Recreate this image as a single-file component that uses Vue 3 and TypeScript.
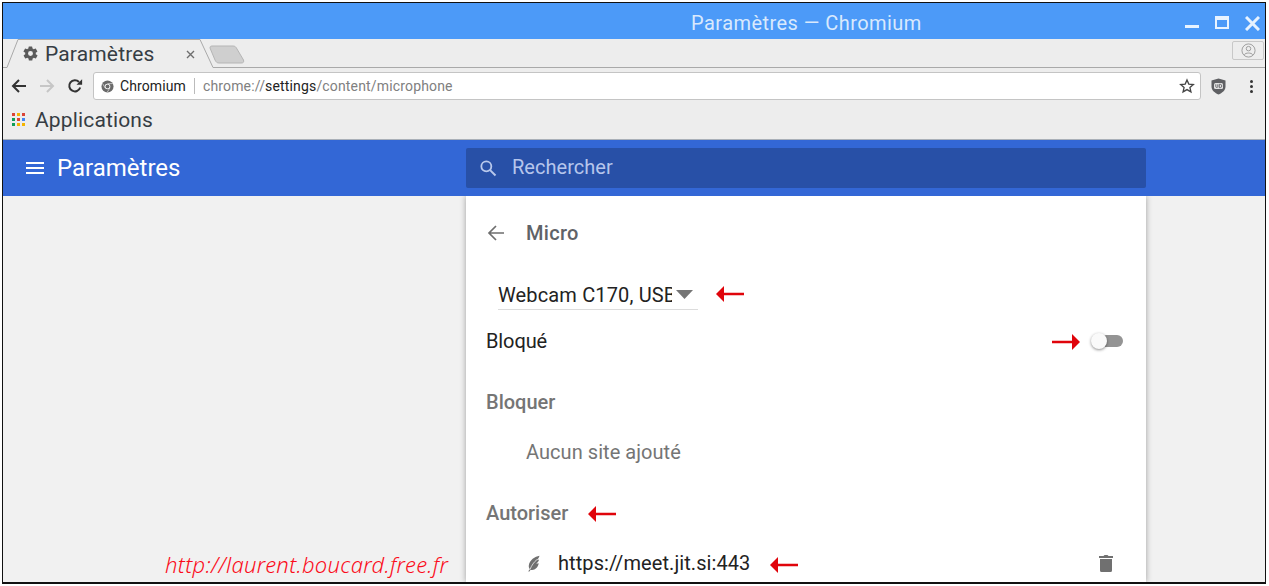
<script setup lang="ts">
interface Arrow { x: number; y: number; dir: 'left' | 'right' }
const arrows: Arrow[] = [
  { x: 715, y: 294, dir: 'left' },
  { x: 1052, y: 342, dir: 'right' },
  { x: 587, y: 514, dir: 'left' },
  { x: 769, y: 565, dir: 'left' },
]
const appDots = ['#db4437', '#f4b400', '#db4437', '#0f9d58', '#db4437', '#4285f4', '#0f9d58', '#f4b400', '#f4b400']
</script>

<template>
  <div class="window">
    <header class="titlebar">
      <span class="title">Paramètres — Chromium</span>
      <div class="wm">
        <svg width="14" height="14" viewBox="0 0 14 14"><rect x="0" y="9" width="14" height="3" fill="#e8f3ff" /></svg>
        <svg width="14" height="14" viewBox="0 0 14 14"><path d="M1 1h12v11H1z" fill="none" stroke="#e8f3ff" stroke-width="2" /><rect x="0" y="0" width="14" height="4" fill="#e8f3ff" /></svg>
        <svg width="15" height="15" viewBox="0 0 15 15"><path d="M1 1l13 13M14 1L1 14" stroke="#e8f3ff" stroke-width="3" /></svg>
      </div>
    </header>

    <div class="tabstrip">
      <svg class="tabshape" width="1263" height="29" viewBox="0 0 1263 29">
        <path d="M0 28.500H4L15 .5H197L210 28.500H1263" fill="none" stroke="#a9a9a9" />
        <path d="M207 9C207 7 208 7 210 7H230C232 7 233 8 234 10L240.500 21C241 23 240.500 24 238 24H216C214 24 213 23 212 21Z" fill="#cfcfcf" stroke="#b5b5b5" />
      </svg>
      <div class="tab">
        <svg class="gear" width="17" height="17" viewBox="0 0 24 24"><path fill="#5a5a5a" d="M19.400 13a7.500 7.500 0 0 0 0-2l2.100-1.600a.5.5 0 0 0 .1-.6l-2-3.500a.5.5 0 0 0-.6-.2l-2.500 1a7.300 7.300 0 0 0-1.700-1l-.4-2.700a.5.5 0 0 0-.5-.4h-4a.5.5 0 0 0-.5.4l-.4 2.700a7.300 7.300 0 0 0-1.700 1l-2.500-1a.5.5 0 0 0-.6.2l-2 3.500a.5.5 0 0 0 .1.6L4.600 11a7.500 7.500 0 0 0 0 2l-2.100 1.600a.5.5 0 0 0-.1.6l2 3.500c.1.2.4.3.6.2l2.500-1a7.300 7.300 0 0 0 1.700 1l.4 2.700c0 .2.3.4.5.4h4c.2 0 .5-.2.5-.4l.4-2.700a7.300 7.300 0 0 0 1.700-1l2.500 1c.2.1.5 0 .6-.2l2-3.500a.5.5 0 0 0-.1-.6zM12 15.500a3.500 3.500 0 1 1 0-7 3.500 3.500 0 0 1 0 7z" /></svg>
        <span class="tabtext">Paramètres</span>
        <svg class="tabx" width="9" height="9" viewBox="0 0 9 9"><path d="M1 1l7 7M8 1L1 8" stroke="#6e6e6e" stroke-width="1.400" /></svg>
      </div>
      <div class="profile">
        <svg width="15" height="15" viewBox="0 0 16 16"><circle cx="8" cy="8" r="7" fill="none" stroke="#9a9a9a" /><circle cx="8" cy="6" r="2.400" fill="none" stroke="#9a9a9a" /><path d="M3.600 12.500c1-2.400 7.800-2.400 8.800 0" fill="none" stroke="#9a9a9a" /></svg>
      </div>
    </div>

    <div class="toolbar">
      <svg class="navicon" width="16" height="16" viewBox="0 0 16 16"><path d="M15 8H2M8 2L2 8l6 6" fill="none" stroke="#333" stroke-width="2" /></svg>
      <svg class="navicon" width="16" height="16" viewBox="0 0 16 16"><path d="M1 8h13M8 2l6 6-6 6" fill="none" stroke="#c6c6c6" stroke-width="2" /></svg>
      <svg class="navicon" width="16" height="16" viewBox="0 0 16 16"><path d="M13.200 9.500A5.600 5.600 0 1 1 12 4" fill="none" stroke="#333" stroke-width="2" /><path d="M9.500 6.800h5.600V1.200z" fill="#333" /></svg>
      <div class="omnibox">
        <svg width="13" height="13" viewBox="0 0 14 14"><circle cx="7" cy="7" r="6.500" fill="#6a6a6a" /><circle cx="7" cy="7" r="3" fill="#fff" /><circle cx="7" cy="7" r="2.100" fill="#6a6a6a" /><path d="M7 3.900h5.600M4.400 8.500L1.800 4M9.600 8.500L6.800 13" stroke="#dedede" stroke-width=".8" /></svg>
        <span class="origin">Chromium</span>
        <span class="sep"></span>
        <span class="url">chrome://<b>settings</b>/content/microphone</span>
        <svg class="star" width="16" height="16" viewBox="0 0 24 24"><path d="M12 3l2.700 6.200 6.800.6-5.100 4.500 1.500 6.600L12 17.400 6.100 20.900l1.500-6.600L2.500 9.800l6.800-.6z" fill="none" stroke="#444" stroke-width="2" /></svg>
      </div>
      <svg class="shield" width="15" height="17" viewBox="0 0 15 17"><path d="M7.500 .5L14.500 2.500V8.500C14.500 12.500 11 15 7.500 16.500C4 15 .5 12.500 .5 8.500V2.500z" fill="#5f6063" /><rect x="3" y="5" width="9" height="6" rx="1.500" fill="#e2e2e2" /><path d="M4.800 6.300v2.400c0 1 2 1 2 0V6.300M8.300 6.300v3.400h1c2 0 2-3.400 0-3.400z" fill="none" stroke="#5f6063" stroke-width=".9" /></svg>
      <div class="menu"><i></i><i></i><i></i></div>
    </div>

    <div class="bookmarks">
      <div class="apps"><i v-for="(c, i) in appDots" :key="i" :style="{ background: c }"></i></div>
      <span class="appstext">Applications</span>
    </div>

    <div class="settings-head">
      <div class="brand">
        <svg width="18" height="14" viewBox="0 0 18 14"><path d="M0 2h18M0 7h18M0 12h18" stroke="#fff" stroke-width="2" /></svg>
        <span>Paramètres</span>
      </div>
      <div class="search">
        <svg width="20" height="20" viewBox="0 0 24 24"><circle cx="10" cy="10" r="6" fill="none" stroke="#b8c8ec" stroke-width="2.200" /><path d="M14.500 14.500l6.500 6.500" stroke="#b8c8ec" stroke-width="2.400" /></svg>
        <span class="searchtext">Rechercher</span>
      </div>
    </div>

    <main class="page">
      <section class="card">
        <div class="subhead">
          <svg width="20" height="20" viewBox="0 0 20 20"><path d="M18 10H3M10 3l-7 7 7 7" fill="none" stroke="#6e6e6e" stroke-width="1.700" /></svg>
          <span>Micro</span>
        </div>
        <div class="select">
          <span class="selecttext">Webcam C170, USB Audio</span>
          <svg width="17" height="9" viewBox="0 0 17 9"><path d="M0 0h17L8.500 9z" fill="#757575" /></svg>
        </div>
        <div class="toggle-row">
          <span>Bloqué</span>
          <div class="switch"><i class="track"></i><i class="knob"></i></div>
        </div>
        <h2 class="section block-head">Bloquer</h2>
        <p class="empty">Aucun site ajouté</p>
        <h2 class="section allow-head">Autoriser</h2>
        <div class="site">
          <svg class="feather" width="14" height="17" viewBox="0 0 14 17"><path d="M12.500 .8C8 1.500 2.500 5 1.800 10.500c-.2 1.600.3 2.800 1.100 3.600L1.300 16.300l.8.500 1.600-2.100c3.800 1 7.600-2.400 8-6.500-1 .4-1.800.4-2.500.3 1.500-.8 2.600-2.200 2.800-3.900-.9.500-1.700.7-2.400.7 1-1 2.400-2.500 2.900-4.500z" fill="#707070" /><path d="M3 14.500C4.500 10.500 7 7 10 4.500" fill="none" stroke="#fff" stroke-width=".7" /></svg>
          <span class="sitename">https://meet.jit.si:443</span>
          <svg class="trash" width="14" height="18" viewBox="0 0 14 18"><path d="M0 2h4.500L5.500 1h3l1 1H14v2H0zM1 5h12v11.500a1.500 1.500 0 0 1-1.500 1.500h-9A1.500 1.500 0 0 1 1 16.500z" fill="#707070" /></svg>
        </div>
      </section>
    </main>

    <a class="watermark">http://laurent.boucard.free.fr</a>
  </div>

  <svg
    v-for="(a, i) in arrows"
    :key="i"
    class="arrow"
    :style="{ left: a.x + 'px', top: a.y - 8 + 'px' }"
    width="29"
    height="16"
    viewBox="0 0 29 16"
  >
    <path v-if="a.dir === 'left'" d="M1 8L9 0V6.800H29V9.200H9V16z" fill="#e0040b" />
    <path v-else d="M28 8L20 0V6.800H0V9.200H20V16z" fill="#e0040b" />
  </svg>
</template>

<style>
html, body { background: #fff; margin: 0; overflow: hidden; }
</style>

<style scoped>
.window {
  position: absolute;
  left: 2px;
  top: 2px;
  width: 1264px;
  height: 582px;
  box-sizing: border-box;
  border: 1px solid #111;
  border-bottom-width: 2px;
  display: flex;
  flex-direction: column;
  overflow: hidden;
  background: #f1f1f1;
  font-family: Roboto, sans-serif;
}
.titlebar {
  flex: 0 0 36px;
  box-sizing: border-box;
  background: #4c9af8;
  display: flex;
  align-items: center;
  padding-left: 688px;
  padding-top: 4px;
  position: relative;
}
.title { color: #d9e9fd; font-size: 20px; letter-spacing: 0.45px; }
.wm {
  position: absolute;
  right: 5px;
  top: 13px;
  display: flex;
  gap: 16px;
  align-items: flex-start;
}
.tabstrip {
  flex: 0 0 29px;
  background: #ededed;
  position: relative;
  display: flex;
}
.tabshape { position: absolute; left: 0; top: 0; }
.tab {
  position: relative;
  margin-left: 19px;
  width: 175px;
  display: flex;
  align-items: center;
  height: 29px;
}
.gear { flex: none; }
.tabtext { margin-left: 6px; font-size: 21px; color: #363d44; letter-spacing: .15px; }
.tabx { position: absolute; left: 164px; top: 11px; }
.profile {
  position: absolute;
  left: 1229px;
  top: 2px;
  width: 30px;
  height: 17px;
  border: 1px solid #c8c8c8;
  border-radius: 2px;
  display: flex;
  align-items: center;
  justify-content: center;
}
.toolbar {
  flex: 0 0 36px;
  background: #ededed;
  display: flex;
  align-items: center;
  padding-left: 8px;
  box-sizing: border-box;
}
.navicon { flex: none; margin-right: 12px; }
.navicon:nth-child(3) { margin-right: 10px; }
.omnibox {
  box-sizing: border-box;
  flex: 0 0 1108px;
  height: 28px;
  background: #fff;
  border: 1px solid #c4c4c4;
  border-radius: 3px;
  display: flex;
  align-items: center;
  padding-left: 7px;
  font-size: 14px;
}
.origin { margin-left: 6px; color: #222; letter-spacing: .1px; }
.sep { width: 1px; height: 16px; background: #bbb; margin: 0 8px; }
.url { color: #808080; letter-spacing: .16px; }
.url b { color: #222; font-weight: 400; }
.star { margin-left: auto; margin-right: 5px; }
.shield { flex: none; margin-left: 10px; }
.menu {
  margin-left: 24px;
  width: 3px;
  display: flex;
  flex-direction: column;
  gap: 2px;
}
.menu i { display: block; width: 3px; height: 3px; border-radius: 50%; background: #333; }
.bookmarks {
  flex: 0 0 35px;
  box-sizing: content-box;
  background: #ededed;
  display: flex;
  align-items: center;
  padding-left: 9px;
  border-bottom: 1px solid #aab0b8;
}
.apps {
  display: grid;
  grid-template-columns: repeat(3, 3px);
  grid-auto-rows: 3px;
  gap: 2px;
  margin-bottom: 4px;
}
.apps i { display: block; }
.appstext {
  margin-left: 10px;
  margin-bottom: 4px;
  font-size: 21px;
  color: #363d44;
  letter-spacing: .15px;
}
.settings-head {
  flex: 0 0 56px;
  background: #3367d6;
  display: flex;
  align-items: center;
  position: relative;
  z-index: 1;
}
.brand {
  width: 463px;
  flex: none;
  box-sizing: border-box;
  padding-left: 23px;
  display: flex;
  align-items: center;
  gap: 13px;
  color: #fff;
  font-size: 24px;
}
.search {
  width: 680px;
  height: 40px;
  background: #2850a7;
  border-radius: 2px;
  display: flex;
  align-items: center;
  padding-left: 12px;
  gap: 14px;
  box-sizing: border-box;
  color: #b6c6ec;
  font-size: 20px;
}
.searchtext { position: relative; top: -1px; letter-spacing: .03px; }
.page {
  flex: 1;
  min-height: 0;
  padding-left: 463px;
  background: #f1f1f1;
}
.card {
  width: 680px;
  height: 100%;
  background: #fff;
  box-shadow: 0 0 6px rgba(0, 0, 0, .35);
  box-sizing: border-box;
  padding: 0 20px;
  display: flex;
  flex-direction: column;
  overflow: hidden;
}
.subhead {
  flex: 0 0 74px;
  display: flex;
  align-items: center;
  gap: 20px;
  color: #5f6368;
  font-size: 20px;
  font-weight: 500;
  letter-spacing: .3px;
}
.select {
  margin-left: 12px;
  width: 200px;
  height: 40px;
  box-sizing: border-box;
  border-bottom: 1px solid #dcdcdc;
  display: flex;
  align-items: center;
  justify-content: space-between;
  padding-right: 5px;
  padding-top: 10px;
  flex: none;
}
.selecttext {
  width: 174px;
  overflow: hidden;
  white-space: nowrap;
  font-size: 20px;
  color: #222;
  letter-spacing: .15px;
}
.toggle-row {
  flex: 0 0 62px;
  display: flex;
  align-items: center;
  justify-content: space-between;
  font-size: 20px;
  color: #222;
  letter-spacing: -.1px;
}
.switch { position: relative; width: 32px; height: 16px; margin-right: 3px; }
.track {
  position: absolute;
  left: 2px;
  top: 2px;
  width: 30px;
  height: 12px;
  border-radius: 6px;
  background: #949494;
}
.knob {
  position: absolute;
  left: 0;
  top: 0;
  width: 16px;
  height: 16px;
  border-radius: 50%;
  background: #fafafa;
  box-shadow: 0 1px 3px rgba(0, 0, 0, .45);
}
.section {
  margin: 0;
  color: #757575;
  font-size: 20px;
  font-weight: 500;
  line-height: 24px;
}
.block-head { margin-top: 18px; }
.empty {
  margin: 26px 0 0 40px;
  color: #757575;
  font-size: 20px;
  line-height: 24px;
  letter-spacing: .05px;
}
.allow-head { margin-top: 37px; }
.site {
  margin-top: 26px;
  display: flex;
  align-items: center;
  padding-left: 41px;
  height: 24px;
  font-size: 20px;
  color: #222;
  position: relative;
}
.sitename { margin-left: 17px; letter-spacing: .08px; }
.trash { position: absolute; left: 613px; top: 3px; }
.watermark {
  position: absolute;
  left: 162px;
  top: 547px;
  color: #fb0d1b;
  font: italic 300 22px/28px "Noto Sans", sans-serif;
  letter-spacing: .31px;
  white-space: nowrap;
  z-index: 2;
}
.arrow { position: absolute; z-index: 3; }
</style>
